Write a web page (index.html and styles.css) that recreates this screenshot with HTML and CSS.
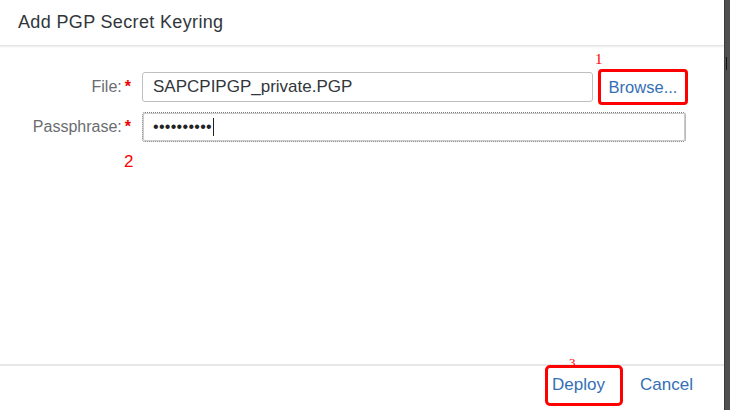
FILE: index.html
```html
<!DOCTYPE html>
<html lang="en">
<head>
    <meta charset="UTF-8">
    <meta name="viewport" content="width=device-width, initial-scale=1.0">
    <title>Add PGP Secret Keyring</title>
    <link rel="stylesheet" href="styles.css">
</head>
<body>
    <div class="screen">
        <div class="dialog">
            <header class="dialog-header">
                <h1>Add PGP Secret Keyring</h1>
            </header>

            <div class="dialog-content">
                <form class="form-grid">
                    <label class="label" for="file">File:<span class="req">*</span></label>
                    <input class="input" id="file" type="text" value="SAPCPIPGP_private.PGP" readonly>
                    <div class="browse-cell">
                        <span class="mark mark-1">1</span>
                        <button type="button" class="btn btn-browse">Browse...</button>
                    </div>

                    <label class="label" for="pass">Passphrase:<span class="req">*</span></label>
                    <div class="input input-pass">
                        <span class="dots">&bull;&bull;&bull;&bull;&bull;&bull;&bull;&bull;&bull;&bull;</span><span class="caret"></span>
                    </div>
                </form>
                <span class="mark mark-2">2</span>
            </div>

            <footer class="dialog-footer">
                <div class="deploy-cell">
                    <span class="mark mark-3">3</span>
                    <button type="button" class="btn btn-deploy">Deploy</button>
                </div>
                <button type="button" class="btn btn-cancel">Cancel</button>
            </footer>
        </div>
        <div class="sidebar">
            <span class="tick"></span>
        </div>
    </div>
</body>
</html>
```

FILE: styles.css
```css
body {
    margin: 0;
    padding: 0;
    font-family: "Liberation Sans", Arial, sans-serif;
    background: #fff;
}
.screen {
    display: flex;
    width: 730px;
    height: 410px;
    overflow: hidden;
}
.dialog {
    width: 725px;
    display: flex;
    flex-direction: column;
    background: #fff;
}
.dialog-header {
    height: 45px;
    border-bottom: 1px solid #e4e4e4;
    box-shadow: 0 1px 2px rgba(0, 0, 0, 0.08);
    display: flex;
    align-items: center;
    padding-left: 18px;
}
.dialog-header h1 {
    margin: 0;
    font-size: 18px;
    letter-spacing: 0.35px;
    font-weight: normal;
    color: #32363a;
}
.dialog-content {
    flex: 1;
    position: relative;
    padding-top: 25px;
}
.form-grid {
    display: grid;
    grid-template-columns: 142px 451px 93px;
    row-gap: 9px;
    align-items: center;
}
.form-grid .input {
    grid-column: 2;
}
.label {
    text-align: right;
    padding-right: 11px;
    font-size: 16px;
    color: #6a6d70;
    white-space: nowrap;
}
.req {
    color: #e00;
    font-weight: bold;
    margin-left: 3px;
}
.input {
    box-sizing: border-box;
    height: 30px;
    border: 1px solid #bfbfbf;
    border-radius: 3px;
    padding: 0 10px;
    font-family: inherit;
    font-size: 17px;
    color: #32363a;
    background: #fff;
    outline: none;
    width: 100%;
}
.form-grid .input-pass {
    grid-column: 2 / 4;
    display: flex;
    align-items: center;
    border: 1px dotted #777;
    box-shadow: inset 0 0 0 1px #ccc;
}
.dots {
    font-size: 16px;
    letter-spacing: 0.3px;
    color: #222;
}
.caret {
    width: 1px;
    height: 18px;
    background: #222;
    margin-left: 1px;
}
.browse-cell,
.deploy-cell {
    position: relative;
}
.browse-cell {
    display: flex;
    justify-content: flex-end;
}
.btn {
    font-family: inherit;
    font-size: 17px;
    color: #346fb5;
    background: #fff;
    border: none;
    cursor: pointer;
    padding: 0;
}
.btn-browse {
    width: 86px;
    height: 32px;
    font-size: 16.5px;
    border-top: 1px solid #5b8fc9;
    outline: 3px solid #f00;
    outline-offset: -1px;
    border-radius: 2px;
}
.btn-deploy {
    width: 72px;
    height: 35px;
    padding-left: 4px;
    text-align: left;
    outline: 3px solid #f00;
    outline-offset: 0;
    border-radius: 2px;
}
.btn-cancel {
    margin-left: 20px;
    height: 35px;
}
.mark {
    position: absolute;
    color: #f00;
    line-height: 1;
}
.mark-1 {
    font-family: "Liberation Serif", serif;
    font-size: 15px;
    left: 2px;
    top: -19px;
}
.mark-2 {
    left: 124px;
    top: 107px;
    font-size: 17px;
}
.mark-3 {
    font-family: "Liberation Serif", serif;
    left: 21px;
    top: -12px;
    font-size: 13px;
}
.dialog-footer {
    height: 46px;
    box-sizing: border-box;
    padding-bottom: 6px;
    border-top: 2px solid #e8e8e8;
    display: flex;
    align-items: center;
    justify-content: flex-end;
    padding-right: 31px;
}
.sidebar {
    width: 5px;
    background: #505050;
    border-left: 1px solid #3a3a3a;
    position: relative;
}
.tick {
    position: absolute;
    left: 1px;
    top: 57px;
    width: 1px;
    height: 13px;
    background: #111;
}
```
